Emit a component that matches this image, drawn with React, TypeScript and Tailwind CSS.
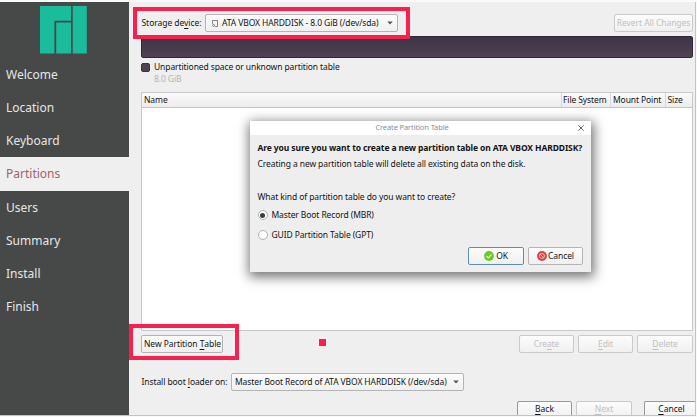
import type { ReactNode } from "react";

const steps = ["Welcome", "Location", "Keyboard", "Partitions", "Users", "Summary", "Install", "Finish"];

function Logo() {
  return (
    <svg className="ml-[40px] mt-[4px] block h-[48px] w-[47px] shrink-0" viewBox="0 0 47 48" fill="#1abc9c">
      <path d="M0 0H31V14.7H14.4V47.5H0Z" />
      <path d="M16.2 16.5H31V47.5H16.2Z" />
      <path d="M32.7 0H46.8V47.5H32.7Z" />
    </svg>
  );
}

function Mnemonic({ children }: { children: ReactNode }) {
  return <span className="underline decoration-1 underline-offset-[1.5px]">{children}</span>;
}

function Button({ children, className = "", disabled = false }: { children: ReactNode; className?: string; disabled?: boolean }) {
  const tone = disabled ? "border-[#cacaca] text-[#c0c0c0]" : "border-[#b4b4b4] text-[#141414]";
  return (
    <button
      className={`flex h-[18px] shrink-0 items-center justify-center rounded-[2px] border bg-linear-to-b from-[#fcfcfc] to-[#f0f0f0] ${tone} ${className}`}
    >
      {children}
    </button>
  );
}

function Arrow() {
  return (
    <svg className="ml-auto mr-[4px] h-[4px] w-[6px] shrink-0" viewBox="0 0 6 4" fill="#555">
      <path d="M0.3 0.5H5.7L3 3.5Z" />
    </svg>
  );
}

function Sidebar() {
  return (
    <nav className="flex w-[129px] shrink-0 flex-col bg-[#464948] text-[12px] text-[#e6e6e6]">
      <Logo />
      <div className="mt-[4px]">
        {steps.map((s) => (
          <div
            key={s}
            className={`flex h-[33.15px] items-center pl-[6px] pt-[1px] ${s === "Partitions" ? "bg-[#efefef] text-[#a35f70]" : ""}`}
          >
            {s}
          </div>
        ))}
      </div>
    </nav>
  );
}

function Radio({ checked = false, children }: { checked?: boolean; children: ReactNode }) {
  return (
    <div className="flex h-[20px] items-center">
      <span className="mr-[4px] flex size-[10px] items-center justify-center rounded-full border border-[#b0b0b0] bg-white">
        {checked && <span className="size-[5px] rounded-full bg-[#3c3c3c]" />}
      </span>
      {children}
    </div>
  );
}

function Dialog() {
  return (
    <div className="absolute left-[250px] top-[121px] flex h-[151px] w-[341px] flex-col bg-[#eeeeee] shadow-[1px_3px_11px_2px_rgba(0,0,0,0.55)]">
      <div className="relative flex h-[14px] items-center justify-center bg-white pr-[17px] text-[7.5px] tracking-[-0.12px] text-[#8490a4]">
        Create Partition Table
        <svg className="absolute right-[7px] top-[4px] size-[6px]" viewBox="0 0 6 6" stroke="#555" strokeWidth="0.9">
          <path d="M0.3 0.3L5.7 5.7M5.7 0.3L0.3 5.7" />
        </svg>
      </div>
      <div className="flex flex-1 flex-col pl-[7.5px] pr-[8px] pt-[5px]">
        <div className="h-[16px] leading-[16px] font-bold">Are you sure you want to create a new partition table on ATA VBOX HARDDISK?</div>
        <div className="h-[16px] leading-[16px] tracking-[-0.09px]">Creating a new partition table will delete all existing data on the disk.</div>
        <div className="mt-[16px] h-[17px] leading-[17px] tracking-[-0.09px]">What kind of partition table do you want to create?</div>
        <Radio checked>Master Boot Record (MBR)</Radio>
        <Radio>GUID Partition Table (GPT)</Radio>
        <div className="mt-[2px] flex justify-end gap-[4px]">
          <Button className="w-[56px] border-[#5c8fb8]! gap-[2px]">
            <svg className="size-[10px]" viewBox="0 0 10 10" fill="none">
              <circle cx="5" cy="5" r="4.9" fill="#6cca22" />
              <path d="M2.6 5.1L4.4 6.8L7.5 3.5" stroke="#fff" strokeWidth="1.1" />
            </svg>
            OK
          </Button>
          <Button className="w-[55px] gap-[1px]">
            <svg className="size-[10px]" viewBox="0 0 10 10" fill="none">
              <circle cx="5" cy="5" r="4.9" fill="#df3f4b" />
              <circle cx="5" cy="5" r="2.5" stroke="#fff" strokeWidth="0.6" />
              <path d="M3.3 3.3L6.7 6.7" stroke="#fff" strokeWidth="0.6" />
            </svg>
            Cancel
          </Button>
        </div>
      </div>
    </div>
  );
}

function PartitionTable() {
  return (
    <div className="mt-[7px] h-[239px] w-[552px] shrink-0 border border-[#c9c9c9] bg-white">
      <div className="flex h-[15px] items-center border-b border-[#c4c4c4] bg-linear-to-b from-[#fafafa] to-[#ededed] leading-[14px]">
        <span className="flex-1 pl-[2px]">Name</span>
        <span className="w-[49px] border-l border-[#d8d8d8] pl-[1px]">File System</span>
        <span className="w-[55px] border-l border-[#d8d8d8] pl-[2px]">Mount Point</span>
        <span className="w-[27px] border-l border-[#d8d8d8] pl-[1.5px]">Size</span>
      </div>
    </div>
  );
}

export default function App() {
  return (
    <div className="relative h-[417px] w-[697px] overflow-hidden whitespace-nowrap bg-[#fafafa] pt-[2px] font-['Noto_Sans',sans-serif] text-[8.5px] leading-none text-[#141414]">
      <div className="flex h-[414px] w-[696px] overflow-hidden border-b border-r border-[#c3c3c3] bg-[#efefef]">
        <Sidebar />
        <main className="flex min-w-0 flex-1 flex-col pl-[12px] tracking-[-0.1px]">
          <div className="mt-[12px] flex w-[552px] shrink-0 items-center">
            <span className="w-[64px] pl-[0.5px] tracking-[-0.05px]">
              Storage de<Mnemonic>v</Mnemonic>ice:
            </span>
            <Button className="w-[193px] justify-start! pl-[6px]">
              <svg className="mr-[4px] h-[7px] w-[6px]" viewBox="0 0 6 7" fill="none" stroke="#666" strokeWidth="0.8">
                <path d="M0.5 0.5H5.5V6.5H3.2M0.5 0.5V3.8" />
                <circle cx="1.6" cy="5.4" r="1" />
              </svg>
              ATA VBOX HARDDISK - 8.0 GiB (/dev/sda)
              <Arrow />
            </Button>
            <Button disabled className="ml-auto w-[79px] tracking-[-0.06px]">Revert All Changes</Button>
          </div>
          <div className="mt-[4px] h-[22px] w-[552px] shrink-0 rounded-[2px] border border-[#302838] bg-linear-to-b from-[#3e3444] to-[#4f4252]" />
          <div className="mt-[3px] flex h-[12px] shrink-0 items-center">
            <span className="mr-[4px] size-[9px] rounded-[2px] border border-[#3b3340] bg-[#4f4353]" />
            Unpartitioned space or unknown partition table
          </div>
          <div className="ml-[13px] h-[12px] shrink-0 leading-[12px] text-[#b4b4b4]">8.0 GiB</div>
          <PartitionTable />
          <div className="mt-[4px] flex w-[552px] shrink-0 gap-[4px]">
            <Button className="mr-auto w-[82px] pl-[1px] tracking-[-0.06px]">
              New Partition&nbsp;<Mnemonic>T</Mnemonic>able
            </Button>
            <Button disabled className="w-[55px]">
              Cre<Mnemonic>a</Mnemonic>te
            </Button>
            <Button disabled className="w-[55px]">
              <Mnemonic>E</Mnemonic>dit
            </Button>
            <Button disabled className="w-[56px]">
              <Mnemonic>D</Mnemonic>elete
            </Button>
          </div>
          <div className="mt-[20px] flex shrink-0 items-center">
            <span className="w-[90px] pl-[0.5px] tracking-[-0.09px]">
              Install boot <Mnemonic>l</Mnemonic>oader on:
            </span>
            <Button className="w-[233px] justify-start! pl-[3px]">
              Master Boot Record of ATA VBOX HARDDISK (/dev/sda)
              <Arrow />
            </Button>
          </div>
          <div className="mt-[10px] flex shrink-0 justify-end tracking-normal">
            <Button className="w-[55px] border-[#999]! pb-[2px]">
              <Mnemonic>B</Mnemonic>ack
            </Button>
            <Button disabled className="ml-[4px] w-[56px] pb-[2px]">
              <Mnemonic>N</Mnemonic>ext
            </Button>
            <Button className="ml-[12px] w-[51px] rounded-r-none! border-r-0! border-[#999]! pl-[3px] pb-[2px]">
              <Mnemonic>C</Mnemonic>ancel
            </Button>
          </div>
        </main>
      </div>
      <div className="tracking-[-0.11px]">
        <Dialog />
      </div>
      <div className="absolute left-[133px] top-[7px] h-[32px] w-[277px] border-4 border-[#f91f4e]" />
      <div className="absolute left-[129px] top-[324px] h-[36px] w-[110px] border-4 border-[#f91f4e]" />
      <div className="absolute left-[319px] top-[339px] size-[7px] bg-[#f91f4e]" />
    </div>
  );
}
